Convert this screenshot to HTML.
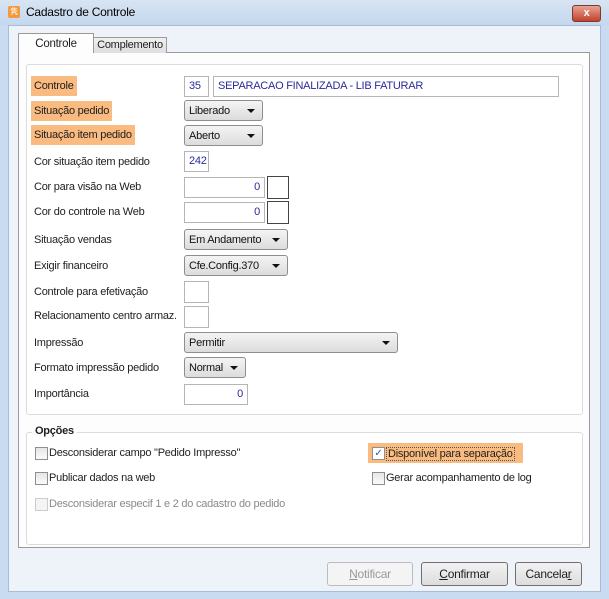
<!DOCTYPE html>
<html><head><meta charset="utf-8"><style>
*{box-sizing:border-box;margin:0;padding:0}
body{width:609px;height:599px;overflow:hidden;font-family:"Liberation Sans",sans-serif;font-size:11px;letter-spacing:-0.25px;color:#1e1e1e;background:#c9dbf0;position:relative}
.a{position:absolute}
.title{left:0;top:0;width:609px;height:25px;background:linear-gradient(#d7e4f3,#c5d8ee)}
.client{left:8px;top:25px;width:593px;height:567px;background:#eef2f9;border:1px solid #a9bcd6}
.panel{left:18px;top:52px;width:572px;height:496px;background:#fdfdfd;border:1px solid #9a9a9a}
.grp{background:#fff;border:1px solid #dcdcdc;border-radius:3px}
.lbl{left:34px;height:20px;line-height:20px}
.hl{background:#f9bb7f;padding:0 3px;left:31px}
.inp{background:#fff;border:1px solid #b5b5b5;height:21px;line-height:19px;padding:0 4px;color:#2a2a9a}
.dd{border:1px solid #8e8e8e;border-radius:3px;background:linear-gradient(#f4f4f4,#dcdcdc);height:21px;line-height:21px;padding:0 4px;color:#111}
.dd:after{content:"";position:absolute;right:7px;top:8px;border:4px solid transparent;border-top:4px solid #111;border-bottom:0}
.sq{background:#fff;border:1px solid #444}
.cb{width:13px;height:13px;border:1px solid #8f8f8f;background:linear-gradient(#e6e6e6,#fafafa)}
.btn{border:1px solid #707070;border-radius:3px;background:linear-gradient(#f2f2f2,#dddddd);text-align:center;height:24px;line-height:22px;font-size:12px}
</style></head><body>
<div class="a title"></div>
<div class="a" style="left:8px;top:6px;width:12px;height:12px;background:#f39a3c;border-radius:2px;color:#fff;font-size:8px;line-height:12px;text-align:center">隽</div>
<div class="a" style="left:26px;top:5px;font-size:12px;color:#000">Cadastro de Controle</div>
<div class="a" style="left:572px;top:5px;width:29px;height:17px;border:1px solid #7a3a30;border-radius:3px;background:linear-gradient(#e8a494,#c2412c);color:#fff;font-weight:bold;text-align:center;line-height:15px;font-size:11px">x</div>
<div class="a client"></div>
<div class="a panel"></div>
<div class="a" style="left:18px;top:33px;width:76px;height:20px;background:#fdfdfd;border:1px solid #9a9a9a;border-bottom:none;text-align:center;line-height:20px;font-size:11.5px">Controle</div>
<div class="a" style="left:93px;top:37px;width:74px;height:16px;background:linear-gradient(#f0f0f0,#dedede);border:1px solid #9a9a9a;border-bottom:none;text-align:center;line-height:15px;font-size:11px">Complemento</div>
<div class="a grp" style="left:26px;top:64px;width:557px;height:351px"></div>
<div class="a grp" style="left:26px;top:432px;width:557px;height:113px"></div>

<div class="a lbl hl" style="top:76px">Controle</div>
<div class="a inp" style="left:184px;top:76px;width:25px">35</div>
<div class="a inp" style="left:213px;top:76px;width:346px">SEPARACAO FINALIZADA - LIB FATURAR</div>
<div class="a lbl hl" style="top:101px">Situação pedido</div>
<div class="a dd" style="left:184px;top:100px;width:79px">Liberado</div>
<div class="a lbl hl" style="top:125px">Situação item pedido</div>
<div class="a dd" style="left:184px;top:125px;width:79px">Aberto</div>
<div class="a lbl" style="top:152px">Cor situação item pedido</div>
<div class="a inp" style="left:184px;top:151px;width:25px">242</div>
<div class="a lbl" style="top:177px">Cor para visão na Web</div>
<div class="a inp" style="left:184px;top:177px;width:81px;text-align:right">0</div>
<div class="a sq" style="left:267px;top:176px;width:22px;height:23px"></div>
<div class="a lbl" style="top:202px">Cor do controle na Web</div>
<div class="a inp" style="left:184px;top:202px;width:81px;text-align:right">0</div>
<div class="a sq" style="left:267px;top:201px;width:22px;height:23px"></div>
<div class="a lbl" style="top:230px">Situação vendas</div>
<div class="a dd" style="left:184px;top:229px;width:104px">Em Andamento</div>
<div class="a lbl" style="top:256px">Exigir financeiro</div>
<div class="a dd" style="left:184px;top:255px;width:104px">Cfe.Config.370</div>
<div class="a lbl" style="top:282px">Controle para efetivação</div>
<div class="a inp" style="left:184px;top:281px;width:25px;height:22px"></div>
<div class="a lbl" style="top:306px">Relacionamento centro armaz.</div>
<div class="a inp" style="left:184px;top:306px;width:25px;height:22px"></div>
<div class="a lbl" style="top:333px">Impressão</div>
<div class="a dd" style="left:184px;top:332px;width:214px">Permitir</div>
<div class="a lbl" style="top:358px">Formato impressão pedido</div>
<div class="a dd" style="left:184px;top:357px;width:62px">Normal</div>
<div class="a lbl" style="top:384px">Importância</div>
<div class="a inp" style="left:184px;top:384px;width:64px;text-align:right">0</div>

<div class="a" style="left:32px;top:425px;background:#fdfdfd;padding:0 3px;font-weight:bold;font-size:11px">Opções</div>
<div class="a cb" style="left:35px;top:447px"></div><div class="a" style="left:49px;top:447px">Desconsiderar campo "Pedido Impresso"</div>
<div class="a cb" style="left:35px;top:472px"></div><div class="a" style="left:49px;top:472px">Publicar dados na web</div>
<div class="a cb" style="left:35px;top:498px;border-color:#ccc;background:#f4f4f4"></div><div class="a" style="left:49px;top:498px;color:#8a8a8a">Desconsiderar especif 1 e 2 do cadastro do pedido</div>
<div class="a" style="left:368px;top:443px;width:155px;height:20px;background:#f9bb7f"></div>
<div class="a cb" style="left:372px;top:447px;background:#fff;color:#2a5ab0;font-size:10px;line-height:11px;text-align:center">✓</div><div class="a" style="left:386px;top:447px;border:1px dotted #555;padding:0 1px;line-height:12px">Disponível para separação</div>
<div class="a cb" style="left:372px;top:472px"></div><div class="a" style="left:386px;top:472px">Gerar acompanhamento de log</div>

<div class="a btn" style="left:327px;top:562px;width:86px;color:#9a9a9a;border-color:#bcbcbc;background:#f4f4f4"><u>N</u>otificar</div>
<div class="a btn" style="left:421px;top:562px;width:87px"><u>C</u>onfirmar</div>
<div class="a btn" style="left:515px;top:562px;width:67px">Cancela<u>r</u></div>
</body></html>
